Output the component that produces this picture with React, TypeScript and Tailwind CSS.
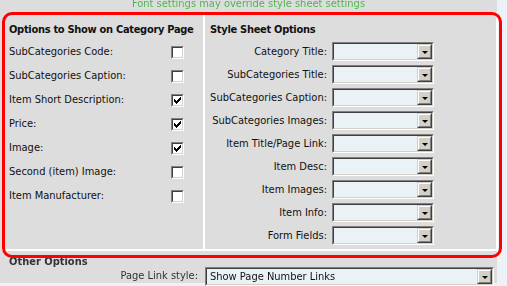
const leftRows: { label: string; checked: boolean }[] = [
  { label: "SubCategories Code:", checked: false },
  { label: "SubCategories Caption:", checked: false },
  { label: "Item Short Description:", checked: true },
  { label: "Price:", checked: true },
  { label: "Image:", checked: true },
  { label: "Second (item) Image:", checked: false },
  { label: "Item Manufacturer:", checked: false },
];

const rightRows = [
  "Category Title:",
  "SubCategories Title:",
  "SubCategories Caption:",
  "SubCategories Images:",
  "Item Title/Page Link:",
  "Item Desc:",
  "Item Images:",
  "Item Info:",
  "Form Fields:",
];

function CheckBox({ checked }: { checked: boolean }) {
  return (
    <div className="h-[13px] w-[13px] border border-t-[#808080] border-l-[#808080] border-b-white border-r-white">
      <div className="flex h-full w-full items-center justify-center border border-t-[#404040] border-l-[#404040] border-b-[#d4d0c8] border-r-[#d4d0c8] bg-white">
        {checked && (
          <svg width="7" height="7" viewBox="0 0 7 7" shapeRendering="crispEdges">
            <path
              fill="#000"
              d="M6 0h1v3h-1zM5 1h1v3h-1zM4 2h1v3h-1zM0 2h1v3h-1zM1 3h1v3h-1zM2 4h1v3h-1zM3 3h1v3h-1z"
            />
          </svg>
        )}
      </div>
    </div>
  );
}

function Select({ width, text }: { width: string; text?: string }) {
  return (
    <div className={`${width} h-[19px] border border-t-[#808080] border-l-[#808080] border-b-white border-r-white`}>
      <div className="flex h-full w-full border border-t-[#404040] border-l-[#404040] border-b-[#d4d0c8] border-r-[#d4d0c8] bg-[#ebf2f6]">
        <div className="flex-1 truncate pl-[3px] text-[11px] leading-[15px]">{text}</div>
        <div className="h-[15px] w-[15px] border border-t-[#d4d0c8] border-l-[#d4d0c8] border-b-[#404040] border-r-[#404040]">
          <div className="flex h-full w-full items-center justify-center border border-t-white border-l-white border-b-[#808080] border-r-[#808080] bg-[#d4d0c8] pt-[2px]">
            <div className="h-0 w-0 border-l-[3px] border-r-[3px] border-t-[3px] border-l-transparent border-r-transparent border-t-black" />
          </div>
        </div>
      </div>
    </div>
  );
}

export default function App() {
  return (
    <div className="relative h-[286px] w-[507px] overflow-hidden bg-[#eef2f6] font-['DejaVu_Sans_Condensed','DejaVu_Sans',sans-serif] text-[11px] text-[#111]">
      <div className="h-full w-[497px] bg-[#dddddd]">
        <div className="-mt-[3px] h-[15px] text-center text-[11px] leading-[14px] text-[#4cb84c] blur-[0.5px]">
          Font settings may override style sheet settings
        </div>

        <div className="ml-[2px] flex h-[239px] w-[496px] border-b-2 border-r-2 border-white">
          <div className="w-[203px] border-r-2 border-white pl-[7px] pt-[10px]">
            <div className="text-[11px] font-bold leading-[16px] tracking-[-0.3px]">
              Options to Show on Category Page
            </div>
            <div className="mt-[2px] flex flex-col">
              {leftRows.map((r) => (
                <div key={r.label} className="flex h-[24px] items-center">
                  <div className="w-[162px] leading-[14px]">{r.label}</div>
                  <CheckBox checked={r.checked} />
                </div>
              ))}
            </div>
          </div>

          <div className="flex-1 pl-[5px] pt-[10px]">
            <div className="text-[11px] font-bold leading-[16px] tracking-[-0.3px]">Style Sheet Options</div>
            <div className="mt-[4px] flex flex-col gap-[4px]">
              {rightRows.map((label) => (
                <div key={label} className="flex h-[19px] items-center">
                  <div className="w-[122px] pr-[5px] text-right leading-[14px]">{label}</div>
                  <Select width="w-[102px]" />
                </div>
              ))}
            </div>
          </div>
        </div>

        <div className="blur-[0.5px]">
          <div className="mt-[5px] pl-[9px] font-bold leading-[11px] text-[#333]">Other Options</div>
          <div className="flex items-center">
            <div className="w-[205px] pr-[7px] text-right text-[#333]">Page Link style:</div>
            <Select width="w-[289px]" text="Show Page Number Links" />
          </div>
        </div>
      </div>

      <div className="pointer-events-none absolute left-[2px] top-[12px] h-[246px] w-[500px] rounded-[10px] border-[3px] border-[#ff0000]" />
    </div>
  );
}
